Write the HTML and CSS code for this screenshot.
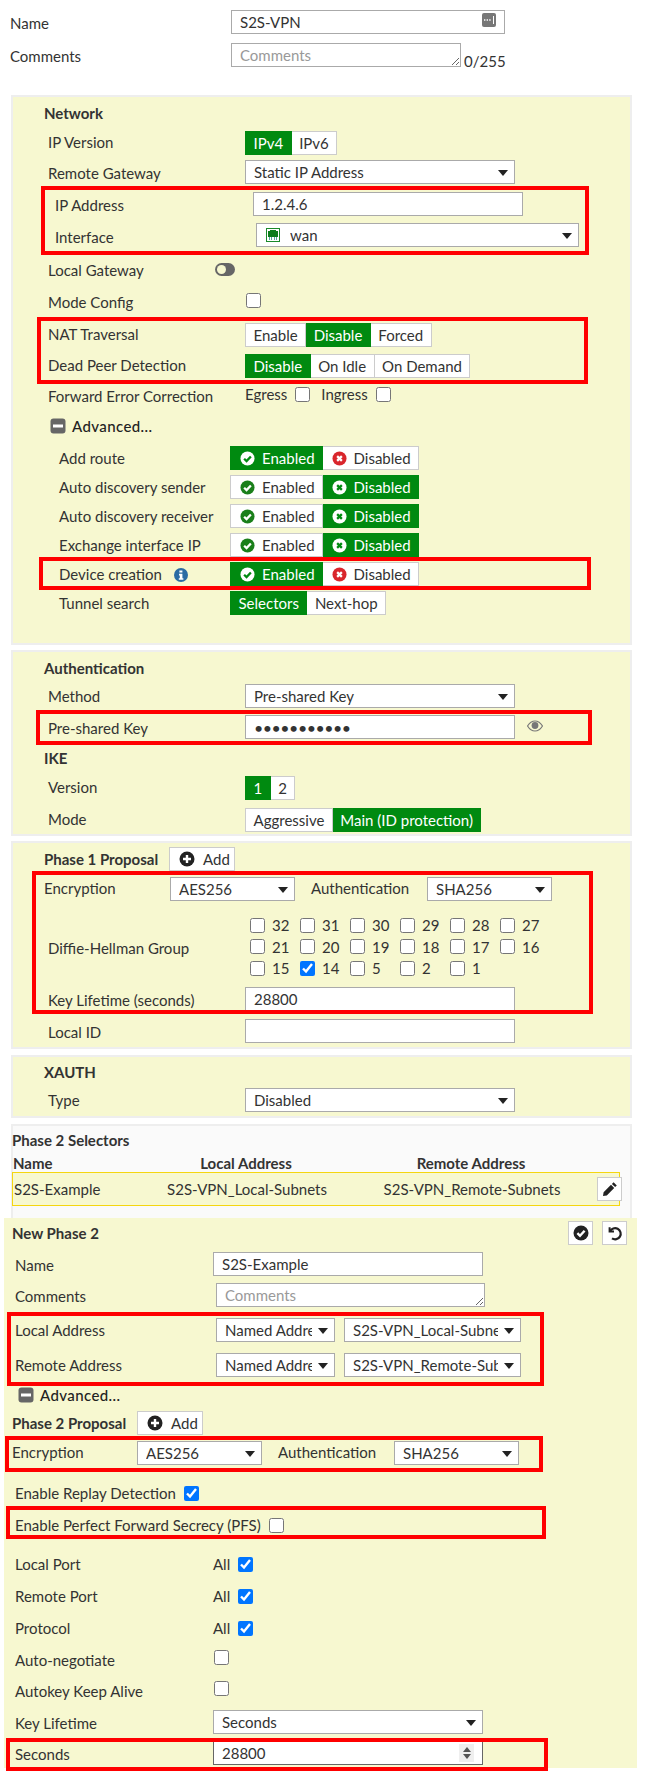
FILE: index.html
```html
<!DOCTYPE html>
<html lang="en">
<head>
    <meta charset="UTF-8">
    <meta name="viewport" content="width=device-width, initial-scale=1.0">
    <title>Edit VPN Tunnel</title>
    <link rel="stylesheet" href="styles.css">
</head>
<body>
<svg class="defs" aria-hidden="true">
    <symbol id="i-ok" viewBox="0 0 16 16"><circle cx="8" cy="8" r="7.5" fill="currentColor"/><path d="M4.4 8.2l2.6 2.6 4.6-5" fill="none" stroke="var(--knock)" stroke-width="2.4"/></symbol>
    <symbol id="i-no" viewBox="0 0 16 16"><circle cx="8" cy="8" r="7.5" fill="currentColor"/><path d="M5.5 5.5l5 5M10.5 5.5l-5 5" fill="none" stroke="var(--knock)" stroke-width="2.4"/></symbol>
    <symbol id="i-plus" viewBox="0 0 16 16"><circle cx="8" cy="8" r="7.5" fill="currentColor"/><path d="M8 4v8M4 8h8" fill="none" stroke="#fff" stroke-width="2.4"/></symbol>
    <symbol id="i-minus" viewBox="0 0 16 16"><rect x="0.5" y="0.5" width="15" height="15" rx="3" fill="#666"/><rect x="3" y="6.5" width="10" height="3" fill="#fff"/></symbol>
</svg>

<div class="page">
    <!-- name / comments -->
    <div class="top-row">
        <label class="top-lbl">Name</label>
        <div class="field">
            <input class="input input-name" type="text" value="S2S-VPN">
            <svg class="name-icon" viewBox="0 0 14 14"><rect width="14" height="14" rx="2" fill="#777"/><path d="M2 7h1.4M4.6 7H6M7.2 7h1.4" stroke="#fff" stroke-width="1.4"/><path d="M11.5 3v8" stroke="#fff"/></svg>
        </div>
    </div>
    <div class="top-row mt-9">
        <label class="top-lbl">Comments</label>
        <textarea class="area area-top" placeholder="Comments"></textarea>
        <span class="count">0/255</span>
    </div>

    <!-- network -->
    <div class="panel panel-net">
        <div class="sec mt-6">Network</div>
        <div class="row mt-8">
            <label class="lbl">IP Version</label>
            <div class="seg"><span class="seg-btn on">IPv4</span><span class="seg-btn">IPv6</span></div>
        </div>
        <div class="row mt-5">
            <label class="lbl lbl-low">Remote Gateway</label>
            <div class="select"><select class="w-270"><option>Static IP Address</option></select></div>
        </div>
        <div class="row row-in mt-8">
            <label class="lbl lbl-ip lbl-low">IP Address</label>
            <input class="input w-270" type="text" value="1.2.4.6">
        </div>
        <div class="row row-in mt-7">
            <label class="lbl lbl-iface">Interface</label>
            <div class="select">
                <select class="w-323 sel-icon"><option>wan</option></select>
                <svg class="wan-icon" viewBox="0 0 14 14"><rect x="0.5" y="0.5" width="13" height="13" fill="#fff" stroke="#1a8a2a"/><path d="M2 3h2V2h6v1h2v6H2z" fill="#0b7d1a"/><path d="M3 9h1v3H3zM5 9h1v3H5zM8 9h1v3H8zM10 9h1v3h-1z" fill="#5a9"/></svg>
            </div>
        </div>
        <div class="row mt-12">
            <label class="lbl">Local Gateway</label>
            <span class="toggle"></span>
        </div>
        <div class="row mt-8">
            <label class="lbl">Mode Config</label>
            <input class="cb cb-raised" type="checkbox">
        </div>
        <div class="row mt-8">
            <label class="lbl">NAT Traversal</label>
            <div class="seg"><span class="seg-btn">Enable</span><span class="seg-btn on">Disable</span><span class="seg-btn">Forced</span></div>
        </div>
        <div class="row mt-7">
            <label class="lbl">Dead Peer Detection</label>
            <div class="seg"><span class="seg-btn on">Disable</span><span class="seg-btn">On Idle</span><span class="seg-btn">On Demand</span></div>
        </div>
        <div class="row mt-7">
            <label class="lbl">Forward Error Correction</label>
            <div class="opts">
                <span>Egress</span><input class="cb" type="checkbox">
                <span class="opt-next">Ingress</span><input class="cb" type="checkbox">
            </div>
        </div>
        <div class="adv mt-5">
            <svg class="ic"><use href="#i-minus"/></svg>
            <span>Advanced...</span>
        </div>
        <div class="row row-adv mt-8">
            <label class="lbl">Add route</label>
            <div class="seg">
                <span class="seg-btn ic-btn on"><svg class="ic ic-ok"><use href="#i-ok"/></svg>Enabled</span><span class="seg-btn ic-btn"><svg class="ic ic-no"><use href="#i-no"/></svg>Disabled</span>
            </div>
        </div>
        <div class="row row-adv mt-5">
            <label class="lbl">Auto discovery sender</label>
            <div class="seg">
                <span class="seg-btn ic-btn"><svg class="ic ic-ok"><use href="#i-ok"/></svg>Enabled</span><span class="seg-btn ic-btn on"><svg class="ic ic-no"><use href="#i-no"/></svg>Disabled</span>
            </div>
        </div>
        <div class="row row-adv mt-5">
            <label class="lbl">Auto discovery receiver</label>
            <div class="seg">
                <span class="seg-btn ic-btn"><svg class="ic ic-ok"><use href="#i-ok"/></svg>Enabled</span><span class="seg-btn ic-btn on"><svg class="ic ic-no"><use href="#i-no"/></svg>Disabled</span>
            </div>
        </div>
        <div class="row row-adv mt-5">
            <label class="lbl">Exchange interface IP</label>
            <div class="seg">
                <span class="seg-btn ic-btn"><svg class="ic ic-ok"><use href="#i-ok"/></svg>Enabled</span><span class="seg-btn ic-btn on"><svg class="ic ic-no"><use href="#i-no"/></svg>Disabled</span>
            </div>
        </div>
        <div class="row row-adv mt-5">
            <label class="lbl">Device creation
                <svg class="ic-info" viewBox="0 0 14 14"><circle cx="7" cy="7" r="7" fill="#2b6ca3"/><path d="M5.4 2.6h3v2h-3zM5 5.8h3.4v4.4h1v1.6H4.8v-1.6h1v-2.8H5z" fill="#fff"/></svg>
            </label>
            <div class="seg">
                <span class="seg-btn ic-btn on"><svg class="ic ic-ok"><use href="#i-ok"/></svg>Enabled</span><span class="seg-btn ic-btn"><svg class="ic ic-no"><use href="#i-no"/></svg>Disabled</span>
            </div>
        </div>
        <div class="row row-adv mt-5">
            <label class="lbl">Tunnel search</label>
            <div class="seg"><span class="seg-btn on">Selectors</span><span class="seg-btn">Next-hop</span></div>
        </div>
    </div>

    <!-- authentication -->
    <div class="panel panel-auth">
        <div class="sec mt-6">Authentication</div>
        <div class="row mt-6">
            <label class="lbl lbl-flat">Method</label>
            <div class="select"><select class="w-270"><option>Pre-shared Key</option></select></div>
        </div>
        <div class="row mt-7">
            <label class="lbl lbl-low">Pre-shared Key</label>
            <input class="input input-pass w-270" type="password" value="12345678901">
            <svg class="eye" viewBox="0 0 16 12"><path d="M0.5 6C3 2 5.5 1 8 1s5 1 7.5 5c-2.5 4-5 5-7.5 5S3 10 0.5 6z" fill="none" stroke="#777" stroke-width="1.2"/><circle cx="8" cy="5.5" r="3.4" fill="#777"/></svg>
        </div>
        <div class="sec mt-9">IKE</div>
        <div class="row mt-8">
            <label class="lbl">Version</label>
            <div class="seg"><span class="seg-btn on">1</span><span class="seg-btn">2</span></div>
        </div>
        <div class="row mt-8">
            <label class="lbl">Mode</label>
            <div class="seg"><span class="seg-btn">Aggressive</span><span class="seg-btn on">Main (ID protection)</span></div>
        </div>
    </div>

    <!-- phase 1 -->
    <div class="panel panel-p1">
        <div class="sec sec-add mt-4">
            <span class="sec-name">Phase 1 Proposal</span>
            <span class="btn-add"><svg class="ic"><use href="#i-plus"/></svg>Add</span>
        </div>
        <div class="row row-prop mt-6">
            <label class="lbl-prop">Encryption</label>
            <div class="select"><select class="w-125"><option>AES256</option></select></div>
            <label class="lbl-auth">Authentication</label>
            <div class="select"><select class="w-125"><option>SHA256</option></select></div>
        </div>
        <div class="row row-dh mt-13">
            <label class="lbl lbl-low">Diffie-Hellman Group</label>
            <div class="dh">
                <label class="dh-item"><input class="cb" type="checkbox">32</label>
                <label class="dh-item"><input class="cb" type="checkbox">31</label>
                <label class="dh-item"><input class="cb" type="checkbox">30</label>
                <label class="dh-item"><input class="cb" type="checkbox">29</label>
                <label class="dh-item"><input class="cb" type="checkbox">28</label>
                <label class="dh-item"><input class="cb" type="checkbox">27</label>
                <label class="dh-item"><input class="cb" type="checkbox">21</label>
                <label class="dh-item"><input class="cb" type="checkbox">20</label>
                <label class="dh-item"><input class="cb" type="checkbox">19</label>
                <label class="dh-item"><input class="cb" type="checkbox">18</label>
                <label class="dh-item"><input class="cb" type="checkbox">17</label>
                <label class="dh-item"><input class="cb" type="checkbox">16</label>
                <label class="dh-item"><input class="cb" type="checkbox">15</label>
                <label class="dh-item"><input class="cb" type="checkbox" checked>14</label>
                <label class="dh-item"><input class="cb" type="checkbox">5</label>
                <label class="dh-item"><input class="cb" type="checkbox">2</label>
                <label class="dh-item"><input class="cb" type="checkbox">1</label>
            </div>
        </div>
        <div class="row mt-8">
            <label class="lbl lbl-low">Key Lifetime (seconds)</label>
            <input class="input w-270" type="text" value="28800">
        </div>
        <div class="row mt-8">
            <label class="lbl lbl-low">Local ID</label>
            <input class="input w-270" type="text">
        </div>
    </div>

    <!-- xauth -->
    <div class="panel panel-xauth">
        <div class="sec mt-5">XAUTH</div>
        <div class="row mt-6">
            <label class="lbl lbl-flat">Type</label>
            <div class="select"><select class="w-270"><option>Disabled</option></select></div>
        </div>
    </div>

    <!-- phase 2 selectors -->
    <div class="panel panel-sel">
        <div class="sel-title">Phase 2 Selectors</div>
        <div class="sel-head">
            <span class="sel-name">Name</span>
            <span>Local Address</span>
            <span>Remote Address</span>
        </div>
        <div class="sel-row">
            <span class="sel-name">S2S-Example</span>
            <span>S2S-VPN_Local-Subnets</span>
            <span>S2S-VPN_Remote-Subnets</span>
            <span class="btn-icon btn-edit">
                <svg viewBox="0 0 16 16" class="ic"><path d="M11.6 1.2l3.2 3.2-1.7 1.7-3.2-3.2zM9 3.8l3.2 3.2-7.4 7.4-3.8.6.6-3.8z" fill="#222"/></svg>
            </span>
        </div>
    </div>

    <!-- new phase 2 -->
    <div class="panel-p2">
        <div class="p2-head">
            <span class="sec-name">New Phase 2</span>
            <div class="p2-tools">
                <span class="btn-icon"><svg class="ic"><use href="#i-ok"/></svg></span>
                <span class="btn-icon"><svg viewBox="0 0 16 16" class="ic"><path d="M2.6 2.2v4.4H7" fill="none" stroke="#222" stroke-width="2"/><path d="M3 6.4A5.6 5.6 0 1 1 5 13.4" fill="none" stroke="#222" stroke-width="2.2"/></svg></span>
            </div>
        </div>
        <div class="row mt-7">
            <label class="lbl lbl-low">Name</label>
            <input class="input w-270" type="text" value="S2S-Example">
        </div>
        <div class="row mt-7">
            <label class="lbl lbl-wide lbl-low">Comments</label>
            <textarea class="area area-p2" placeholder="Comments"></textarea>
        </div>
        <div class="row mt-11">
            <label class="lbl lbl-wide">Local Address</label>
            <div class="select"><select class="w-119"><option>Named Address</option></select></div>
            <div class="select sel-next"><select class="w-177"><option>S2S-VPN_Local-Subnets</option></select></div>
        </div>
        <div class="row mt-11">
            <label class="lbl lbl-wide">Remote Address</label>
            <div class="select"><select class="w-119"><option>Named Address</option></select></div>
            <div class="select sel-next"><select class="w-177"><option>S2S-VPN_Remote-Subnets</option></select></div>
        </div>
        <div class="adv mt-6">
            <svg class="ic"><use href="#i-minus"/></svg>
            <span>Advanced...</span>
        </div>
        <div class="sec sec-add mt-4">
            <span class="sec-name">Phase 2 Proposal</span>
            <span class="btn-add"><svg class="ic"><use href="#i-plus"/></svg>Add</span>
        </div>
        <div class="row row-prop mt-6">
            <label class="lbl-prop">Encryption</label>
            <div class="select"><select class="w-125"><option>AES256</option></select></div>
            <label class="lbl-auth">Authentication</label>
            <div class="select"><select class="w-125"><option>SHA256</option></select></div>
        </div>
        <div class="row mt-16">
            <label>Enable Replay Detection</label>
            <input class="cb cb-after" type="checkbox" checked>
        </div>
        <div class="row mt-8">
            <label>Enable Perfect Forward Secrecy (PFS)</label>
            <input class="cb cb-after" type="checkbox">
        </div>
        <div class="row mt-15">
            <label class="lbl">Local Port</label>
            <span>All</span><input class="cb cb-after" type="checkbox" checked>
        </div>
        <div class="row mt-8">
            <label class="lbl">Remote Port</label>
            <span>All</span><input class="cb cb-after" type="checkbox" checked>
        </div>
        <div class="row mt-8">
            <label class="lbl">Protocol</label>
            <span>All</span><input class="cb cb-after" type="checkbox" checked>
        </div>
        <div class="row mt-8">
            <label class="lbl">Auto-negotiate</label>
            <input class="cb cb-raised" type="checkbox">
        </div>
        <div class="row mt-7">
            <label class="lbl">Autokey Keep Alive</label>
            <input class="cb cb-raised" type="checkbox">
        </div>
        <div class="row mt-7">
            <label class="lbl lbl-low">Key Lifetime</label>
            <div class="select"><select class="w-270"><option>Seconds</option></select></div>
        </div>
        <div class="row mt-7">
            <label class="lbl lbl-low">Seconds</label>
            <div class="field">
                <input class="input input-focus w-270" type="text" value="28800">
                <span class="spin"><i class="spin-up"></i><i class="spin-down"></i></span>
            </div>
        </div>
    </div>

    <!-- red annotation boxes drawn over the form -->
    <div class="mark mark-ip"></div>
    <div class="mark mark-nat"></div>
    <div class="mark mark-dev"></div>
    <div class="mark mark-psk"></div>
    <div class="mark mark-p1"></div>
    <div class="mark mark-addr"></div>
    <div class="mark mark-enc"></div>
    <div class="mark mark-pfs"></div>
    <div class="mark mark-sec"></div>
</div>
</body>
</html>
```

FILE: styles.css
```css
body {
    margin: 0;
    font-family: "Lato", "Liberation Sans", sans-serif;
    font-size: 15px;
    color: #333;
    background-color: #fff;
}
.defs {
    display: none;
}
.page {
    position: relative;
    height: 1773px;
    overflow: hidden;
    padding-top: 10px;
    box-sizing: border-box;
    --knock: #fff;
}

/* spacing helpers */
.mt-4 { margin-top: 4px; }
.mt-5 { margin-top: 5px; }
.mt-6 { margin-top: 6px; }
.mt-7 { margin-top: 7px; }
.mt-8 { margin-top: 8px; }
.mt-9 { margin-top: 9px; }
.mt-11 { margin-top: 11px; }
.mt-12 { margin-top: 12px; }
.mt-13 { margin-top: 13px; }
.mt-15 { margin-top: 15px; }
.mt-16 { margin-top: 16px; }

.w-119 { width: 119px; }
.w-125 { width: 125px; }
.w-177 { width: 177px; }
.w-270 { width: 270px; }
.w-323 { width: 323px; }

/* top fields */
.top-row {
    display: flex;
    align-items: flex-start;
    height: 24px;
    padding-left: 10px;
}
.top-lbl {
    width: 221px;
    padding-top: 4px;
}
.count {
    margin: 9px 0 0 3px;
}

/* panels */
.panel {
    width: 617px;
    margin: 5px 0 0 11px;
    border: 2px solid #eeeeee;
    background-color: #f7f8d0;
}
.panel-net {
    margin-top: 28px;
    padding-bottom: 28px;
}
.panel-auth {
    padding-bottom: 2px;
}
.panel-p1 {
    padding-bottom: 4px;
}
.panel-xauth {
    margin-top: 6px;
    padding-bottom: 4px;
}
.panel-sel {
    margin-top: 6px;
    padding-bottom: 12px;
    border-bottom: none;
    background-color: #fafafa;
}
.panel-p2 {
    width: 633px;
    margin-left: 4px;
    padding: 3px 0 3px 0;
    background-color: #f7f8d0;
}

.sec {
    display: flex;
    align-items: center;
    height: 20px;
    padding-left: 31px;
    font-weight: bold;
}
.sec-add {
    height: 24px;
}
.sec-name {
    width: 124px;
    font-weight: bold;
    white-space: nowrap;
}
.panel-p2 .sec {
    padding-left: 8px;
}

/* rows */
.row {
    display: flex;
    align-items: center;
    height: 24px;
    padding-left: 35px;
    white-space: nowrap;
}
.row-in {
    padding-left: 42px;
}
.row-adv {
    padding-left: 46px;
}
.row-prop {
    padding-left: 31px;
}
.panel-p2 .row {
    padding-left: 11px;
}
.panel-p2 .row-prop {
    padding-left: 8px;
}
.row-dh {
    height: 65px;
}
.lbl {
    width: 197px;
    flex-shrink: 0;
    padding-bottom: 3px;
}
.panel-p2 .lbl {
    width: 198px;
    padding-bottom: 1px;
}
.panel-p2 .lbl-wide {
    width: 201px;
}
.lbl-ip {
    width: 198px;
}
.lbl-iface {
    width: 201px;
    padding-top: 4px;
    padding-bottom: 0;
}
.row-adv .lbl {
    width: 171px;
    padding-bottom: 0;
}
.lbl-low,
.panel-p2 .lbl-low {
    padding-top: 2px;
    padding-bottom: 0;
}
.lbl-flat {
    padding-bottom: 0;
}
.lbl-prop {
    width: 126px;
    padding-bottom: 2px;
}
.panel-p2 .lbl-prop {
    width: 125px;
}
.lbl-auth {
    width: 116px;
    margin-left: 16px;
    padding-bottom: 2px;
}

/* form controls */
.input, .area, select {
    box-sizing: border-box;
    height: 24px;
    padding: 0 8px;
    border: 1px solid #aaa;
    border-radius: 0;
    background-color: #fff;
    font-family: inherit;
    font-size: 15px;
    color: #333;
    outline: none;
}
.input-name {
    width: 274px;
}
.input-focus {
    border-color: #666;
}
.input-pass {
    font-size: 16px;
    letter-spacing: -0.5px;
}
.area {
    display: block;
    padding-top: 2px;
    line-height: 18px;
}
.area::placeholder {
    color: #999;
}
.area-top {
    width: 230px;
}
.area-p2 {
    width: 269px;
}
select {
    appearance: none;
    padding-right: 22px;
}
.sel-icon {
    padding-left: 33px;
}
.select {
    position: relative;
    height: 24px;
}
.select::after {
    content: "";
    position: absolute;
    top: 10px;
    right: 7px;
    border-left: 5px solid transparent;
    border-right: 5px solid transparent;
    border-top: 6px solid #222;
    pointer-events: none;
}
.sel-next {
    margin-left: 9px;
}
.wan-icon {
    position: absolute;
    top: 5px;
    left: 10px;
    width: 14px;
    height: 14px;
}
.field {
    position: relative;
    height: 24px;
}
.name-icon {
    position: absolute;
    top: 3px;
    left: 251px;
    width: 14px;
    height: 14px;
}
.spin {
    position: absolute;
    top: 3px;
    right: 9px;
    display: flex;
    flex-direction: column;
    justify-content: center;
    align-items: center;
    gap: 2px;
    width: 15px;
    height: 18px;
    background-color: #efefef;
}
.spin i {
    border-left: 4px solid transparent;
    border-right: 4px solid transparent;
}
.spin-up {
    border-bottom: 5px solid #555;
}
.spin-down {
    border-top: 5px solid #555;
}
.cb {
    width: 15px;
    height: 15px;
    margin: 0 0 0 1px;
    flex-shrink: 0;
}
.cb-raised {
    margin-bottom: 5px;
}
.cb-after {
    margin-left: 8px;
}
.eye {
    width: 16px;
    height: 12px;
    margin: 0 0 3px 12px;
}
.toggle {
    position: relative;
    width: 20px;
    height: 13px;
    margin: 0 0 4px -30px;
    border-radius: 7px;
    background-color: #666;
}
.toggle::after {
    content: "";
    position: absolute;
    top: 2px;
    left: 2px;
    width: 9px;
    height: 9px;
    border-radius: 50%;
    background-color: #f7f8d0;
}
.opts {
    display: flex;
    align-items: center;
    margin-bottom: 6px;
}
.opts .cb {
    margin-left: 8px;
}
.opt-next {
    margin-left: 11px;
}

/* segmented buttons */
.seg {
    display: flex;
    height: 24px;
}
.seg-btn {
    display: flex;
    align-items: center;
    box-sizing: border-box;
    height: 24px;
    padding: 0 7.5px;
    border: 1px solid #ccc;
    background-color: #fff;
    white-space: nowrap;
}
.seg-btn + .seg-btn {
    border-left: none;
}
.seg-btn.on {
    border-color: #008a10;
    background-color: #008a10;
    color: #fff;
}
.ic-btn {
    padding: 0 7px 0 9px;
}
.ic {
    display: block;
    width: 16px;
    height: 16px;
    flex-shrink: 0;
}
.ic-btn .ic {
    width: 15px;
    height: 15px;
    margin-right: 7px;
}
.ic-ok {
    color: #1a7f1a;
}
.ic-no {
    color: #d9262c;
}
.seg-btn.on .ic {
    color: #fff;
    --knock: #008a10;
}
.ic-info {
    width: 14px;
    height: 14px;
    margin-left: 8px;
    vertical-align: -2px;
}

.adv {
    display: flex;
    align-items: center;
    gap: 6px;
    height: 24px;
    padding-left: 37px;
    font-weight: 500;
    letter-spacing: 0.4px;
    color: #222;
}
.panel-p2 .adv {
    padding-left: 14px;
}

.btn-add {
    display: flex;
    align-items: center;
    gap: 8px;
    box-sizing: border-box;
    height: 24px;
    width: 66px;
    margin-left: 1px;
    padding-left: 9px;
    border: 1px solid #ccc;
    background-color: #fff;
    font-weight: normal;
}
.btn-add .ic {
    color: #222;
}
.btn-icon {
    display: flex;
    align-items: center;
    justify-content: center;
    box-sizing: border-box;
    width: 25px;
    height: 24px;
    border: 1px solid #ccc;
    background-color: #fff;
    color: #222;
}

/* diffie-hellman grid */
.dh {
    display: grid;
    grid-template-columns: repeat(6, 50px);
    grid-auto-rows: 21.5px;
    margin-left: 4px;
}
.dh-item {
    display: flex;
    align-items: center;
    gap: 7px;
}

/* phase 2 selector table */
.sel-title {
    height: 20px;
    margin: 5px 0 0 -1px;
    font-weight: bold;
}
.sel-head, .sel-row {
    display: grid;
    grid-template-columns: 123px 200px 230px 1fr;
    column-gap: 10px;
    align-items: center;
    text-align: center;
    width: 608px;
    box-sizing: border-box;
    margin-left: -1px;
    padding: 0 4px 0 1px;
}
.sel-head {
    height: 18px;
    margin-top: 3px;
    font-weight: bold;
}
.sel-row {
    height: 34px;
    border: 1px solid #f5d60f;
    background-color: #f7f8d0;
}
.sel-name {
    text-align: left;
}
.btn-edit {
    justify-self: end;
}

/* new phase 2 */
.p2-head {
    display: flex;
    align-items: center;
    justify-content: space-between;
    height: 24px;
    padding: 0 10px 0 8px;
}
.p2-tools {
    display: flex;
    gap: 9px;
}

/* red annotation boxes */
.mark {
    position: absolute;
    box-sizing: border-box;
    border: 4px solid #f00;
    pointer-events: none;
}
.mark-ip { left: 41px; top: 186px; width: 548px; height: 69px; }
.mark-nat { left: 37px; top: 317px; width: 551px; height: 67px; }
.mark-dev { left: 39px; top: 557px; width: 552px; height: 33px; }
.mark-psk { left: 36px; top: 710px; width: 556px; height: 35px; }
.mark-p1 { left: 32px; top: 871px; width: 561px; height: 143px; }
.mark-addr { left: 7px; top: 1312px; width: 537px; height: 74px; }
.mark-enc { left: 5px; top: 1436px; width: 538px; height: 36px; }
.mark-pfs { left: 6px; top: 1506px; width: 540px; height: 33px; }
.mark-sec { left: 6px; top: 1738px; width: 542px; height: 33px; }
```
